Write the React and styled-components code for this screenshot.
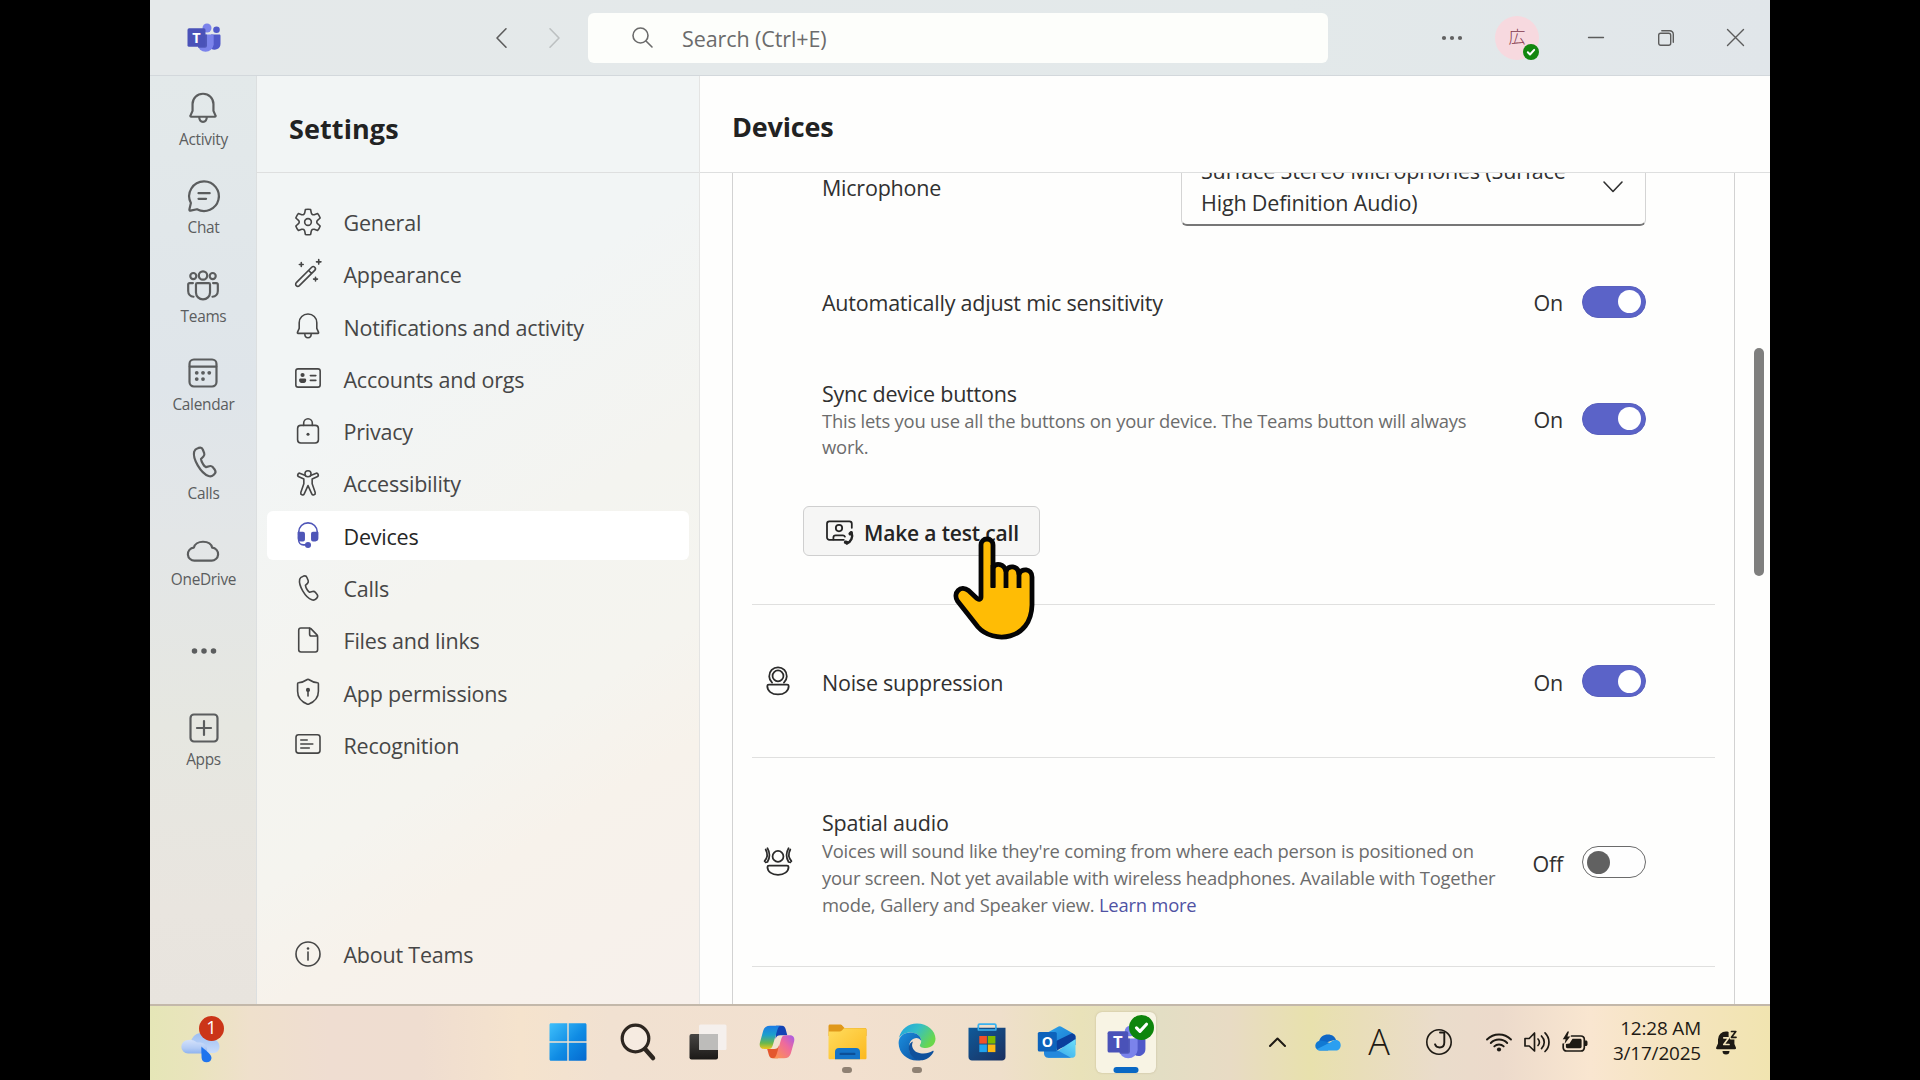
import React from "react";
import styled, { createGlobalStyle } from "styled-components";

const Global = createGlobalStyle`
  * { box-sizing: border-box; }
  html, body { margin: 0; padding: 0; background: #000; overflow: hidden; }
  body { font-family: "Open Sans", "Noto Sans", "Noto Sans CJK JP", sans-serif; color: #2b2b2b; }
`;

/* ---------- shell ---------- */
const Screen = styled.div`
  width: 1920px;
  height: 1080px;
  padding: 0 150px;
  background: #000;
`;
const Desktop = styled.div`
  width: 1620px;
  height: 1080px;
  display: flex;
  flex-direction: column;
  overflow: hidden;
`;
const Window = styled.div`
  height: 1004px;
  display: flex;
  flex-direction: column;
  background: #fefefd;
`;
const Columns = styled.div`
  flex: 1;
  min-height: 0;
  display: flex;
`;

/* ---------- title bar ---------- */
const TitleBar = styled.header`
  height: 76px;
  flex: none;
  display: flex;
  align-items: center;
  border-bottom: 1px solid #d3d8dc;
  background: linear-gradient(90deg, #e5e9ea 0%, #e3e9ea 70%, #e1e6ea 100%);
`;
const BarItem = styled.div`
  display: flex;
  flex: none;
  margin-left: ${(p) => p.$ml}px;
  color: ${(p) => p.$color || "#5c5c5c"};
`;
const SearchBox = styled.div`
  width: 740px;
  height: 50px;
  margin-left: 28px;
  padding-left: 44px;
  display: flex;
  align-items: center;
  gap: 29px;
  border-radius: 6px;
  background: #fdfefb;
  color: #6b6b6b;
  font-size: 21.5px;
  letter-spacing: -0.1px;
  line-height: 30px;
  span { padding-top: 3px; }
`;
const Avatar = styled.div`
  position: relative;
  width: 44px;
  height: 44px;
  margin-left: 32px;
  display: flex;
  align-items: center;
  justify-content: center;
  border-radius: 50%;
  background: #f7d9df;
  color: #83384c;
  font: 300 17px/20px "Noto Sans CJK JP", sans-serif;
`;
const AvatarText = styled.span`
  padding-bottom: 3px;
`;
const Presence = styled.span`
  position: absolute;
  right: 0;
  bottom: 0;
  width: 16px;
  height: 16px;
  display: flex;
  border-radius: 50%;
  background: #13870f;
`;

/* ---------- app rail ---------- */
const Rail = styled.nav`
  width: 107px;
  flex: none;
  padding: 13px 0 0 1px;
  display: flex;
  flex-direction: column;
  align-items: center;
  border-right: 1px solid #dcdfe0;
  background: linear-gradient(180deg, #e3e9ea 0%, #dfe5ea 33%, #e3e6e7 50%, #e6e7e1 70%, #e9e5df 90%, #e8e4de 100%);
`;
const RailItem = styled.a`
  margin-top: ${(p) => (p.$gap === undefined ? 27.4 : p.$gap)}px;
  display: flex;
  flex-direction: column;
  align-items: center;
  gap: 3px;
  color: #5b5d5e;
  font-size: 15.4px;
  line-height: 20px;
  letter-spacing: -0.3px;
`;

/* ---------- settings panel ---------- */
const Panel = styled.aside`
  width: 442px;
  flex: none;
  display: flex;
  flex-direction: column;
  background: linear-gradient(148deg, #f2f5f5 0%, #f2f5f5 32%, #f4f4f0 52%, #f5f4ef 68%, #f7f2eb 78%, #f7f0eb 100%);
`;
const PanelTitle = styled.h1`
  height: 97px;
  margin: 0;
  padding: ${(p) => (p.$main ? "32px 0 0 32px" : "34px 0 0 32px")};
  border-bottom: 1px solid #dedfdf;
  color: #222;
  font-size: 27px;
  font-weight: 700;
  line-height: 38px;
  letter-spacing: ${(p) => (p.$main ? -0.2 : 0.1)}px;
`;
const NavList = styled.div`
  flex: 1;
  padding: 24px 10px 0 10px;
  display: flex;
  flex-direction: column;
  gap: 3.3px;
`;
const NavItem = styled.a`
  height: 49px;
  flex: none;
  margin-top: ${(p) => (p.$last ? "auto" : 0)};
  margin-bottom: ${(p) => (p.$last ? 26 : 0)}px;
  padding-left: 25px;
  display: flex;
  align-items: center;
  gap: 19.5px;
  border-radius: 6px;
  background: ${(p) => (p.$active ? "#fff" : "transparent")};
  color: ${(p) => (p.$active ? "#262626" : "#464646")};
  font-size: 21.5px;
  line-height: 30px;
  letter-spacing: -0.22px;
  svg { color: ${(p) => (p.$active ? "#4f56b8" : "inherit")}; }
  span { padding-top: 3px; }
`;

/* ---------- main ---------- */
const Main = styled.main`
  flex: 1;
  min-width: 0;
  display: flex;
  flex-direction: column;
  border-left: 1px solid #e4e4e3;
  background: #fefefd;
`;
const Body = styled.div`
  flex: 1;
  min-height: 0;
  padding-left: 32px;
  display: flex;
  align-items: flex-start;
  overflow: hidden;
`;
const Card = styled.div`
  width: 1003px;
  height: 940px;
  margin-top: -26px;
  padding: 0 19px;
  flex: none;
  border: 1px solid #d2d2d2;
`;
const ScrollThumb = styled.div`
  width: 10px;
  height: 228px;
  margin: 175px 0 0 19px;
  border-radius: 5px;
  background: #7f7f7e;
`;
const Section = styled.section`
  height: ${(p) => p.$h}px;
  border-bottom: 1px solid #e0e0df;
`;
const SettingRow = styled.div`
  height: ${(p) => p.$h}px;
  margin-top: ${(p) => p.$mt || 0}px;
  padding-right: 69px;
  display: grid;
  grid-template-columns: 70px 682px 1fr;
  align-items: center;
`;
const IconCell = styled.div`
  width: 51px;
  display: flex;
  justify-content: center;
  color: #2b2b2b;
`;
const Copy = styled.div`
  padding-top: ${(p) => (p.$pt === undefined ? 2 : p.$pt)}px;
`;
const Label = styled.div`
  color: #303030;
  font-size: 21.5px;
  line-height: 29px;
  letter-spacing: -0.23px;
`;
const Hint = styled.div`
  color: #6c6c6c;
  font-size: 18.4px;
  line-height: ${(p) => p.$lh}px;
  letter-spacing: -0.21px;
  a { color: #4f52a3; }
`;
const Control = styled.div`
  display: flex;
  align-items: center;
  justify-content: flex-end;
  gap: 19px;
  color: #303030;
  font-size: 21.5px;
  line-height: 29px;
  letter-spacing: -0.2px;
  span { padding-top: 2px; }
`;
const Switch = styled.div`
  width: 64px;
  height: 32px;
  padding: 0 4px;
  display: flex;
  align-items: center;
  justify-content: ${(p) => (p.$on ? "flex-end" : "flex-start")};
  border-radius: 16px;
  border: 1.5px solid ${(p) => (p.$on ? "#5960bd" : "#6b6b6b")};
  background: ${(p) => (p.$on ? "#5b63c8" : "#fefefe")};
  &::after {
    content: "";
    width: 23px;
    height: 23px;
    border-radius: 50%;
    background: ${(p) => (p.$on ? "#fff" : "#616161")};
  }
`;
const MicRow = styled.div`
  height: 78px;
  padding: 0 69px 0 70px;
  display: flex;
  align-items: center;
  justify-content: space-between;
`;
const Select = styled.div`
  width: 465px;
  height: 78px;
  padding: 1px 19px 0 19px;
  display: flex;
  align-items: center;
  justify-content: space-between;
  border: 1px solid #d4d4d4;
  border-bottom: 2px solid #777;
  border-radius: 6px;
  color: #303030;
  font-size: 21.5px;
  line-height: 32px;
  letter-spacing: -0.17px;
  p { margin: 0; width: 372px; }
`;
const TestButton = styled.button`
  position: relative;
  width: 237px;
  height: 50px;
  margin: 29px 0 0 51px;
  padding: 0 0 0 19px;
  display: flex;
  align-items: center;
  gap: 9px;
  border: 1.5px solid #cfcfcf;
  border-radius: 6px;
  background: #f6f6f5;
  color: #242424;
  font: 600 21px/30px "Open Sans", sans-serif;
  letter-spacing: -0.16px;
  white-space: nowrap;
  span { padding-top: 4px; }
`;
const Pointer = styled.svg`
  position: absolute;
  left: 148px;
  top: 27px;
  width: 84px;
  height: 107px;
`;

/* ---------- taskbar ---------- */
const Taskbar = styled.footer`
  height: 76px;
  flex: none;
  padding: 0 33px 2px 31px;
  display: flex;
  align-items: center;
  border-top: 2px solid #c3b8aa;
  background: linear-gradient(90deg, #e5e6b7 0, #e9e4bc 40px, #efe0cc 100px, #efddd1 180px, #efddd0 270px, #f5e3cd 370px, #f1e1d1 460px, #f2e0cf 700px, #efdfcb 850px, #e9e2b9 930px, #e3dec4 1010px, #e8dbc4 1080px, #e8e1ad 1160px, #e9deb9 1210px, #eadccb 1290px, #ecdacb 1350px, #f9e6d0 1440px, #f5e4c0 1520px, #f1e4b0 1620px);
`;
const Weather = styled.div`
  position: relative;
  width: 40px;
  display: flex;
  padding-top: 7px;
`;
const CountBadge = styled.span`
  position: absolute;
  left: 18px;
  top: -6px;
  width: 25px;
  height: 25px;
  border-radius: 50%;
  background: #cb3518;
  color: #fff;
  font-size: 18px;
  line-height: 23px;
  text-align: center;
`;
const PinnedApps = styled.div`
  margin-left: 317px;
  display: flex;
  gap: 9.8px;
`;
const AppSlot = styled.div`
  position: relative;
  width: 60px;
  height: 61px;
  display: flex;
  align-items: center;
  justify-content: center;
  border-radius: 6px;
  background: ${(p) => (p.$active ? "#f8f4e4" : "transparent")};
  box-shadow: ${(p) => (p.$active ? "0 0 2px rgba(120,100,60,.35)" : "none")};
  &::after {
    content: "";
    display: ${(p) => (p.$run ? "block" : "none")};
    position: absolute;
    bottom: 0;
    left: 50%;
    width: ${(p) => (p.$active ? 25 : 10)}px;
    height: 6px;
    transform: translateX(-50%);
    border-radius: 3px;
    background: ${(p) => (p.$active ? "#0a68c4" : "#8f8173")};
  }
`;
const AppCheck = styled.span`
  position: absolute;
  right: 2px;
  top: 3px;
  width: 25px;
  height: 25px;
  display: flex;
  border-radius: 50%;
  background: #0e850c;
`;
const Tray = styled.div`
  margin-left: auto;
  display: flex;
  align-items: center;
  color: #1e1a14;
`;
const TrayItem = styled.div`
  margin-left: ${(p) => p.$ml || 0}px;
  display: flex;
`;
const ImeMode = styled.span`
  width: 26px;
  margin: 0 -3px;
  font: 300 36px/36px "Open Sans", sans-serif;
  text-align: center;
`;
const Clock = styled.div`
  width: 113px;
  padding-bottom: 2px;
  font-size: 18.9px;
  line-height: 25px;
  letter-spacing: -0.15px;
  text-align: right;
`;

/* ---------- icons ---------- */
const Svg = styled.svg`
  width: ${(p) => p.$w}px;
  height: ${(p) => p.$h || p.$w}px;
  flex: none;
  display: block;
  fill: none;
  stroke: currentColor;
  stroke-width: ${(p) => p.$sw || 1};
  stroke-linecap: round;
  stroke-linejoin: round;
  overflow: visible;
`;
const PHONE =
  "M6.7 2.75l.6-.2c.9-.3 1.8.2 2.1 1l.7 1.8c.2.6.1 1.3-.4 1.8L8.4 8.4c.1.9.5 1.8 1.1 2.7.4.7.9 1.2 1.5 1.6l1.8-.5c.7-.2 1.4 0 1.9.6l1 1.3c.5.7.4 1.6-.2 2.2l-.5.5c-.7.7-1.7.9-2.6.6-2.1-.7-4-2.7-5.7-5.6C5 8.8 4.4 6.3 4.8 4.6c.3-.9 1-1.6 1.9-1.85z";
const ART = {
  gear: (
    <>
      <path d="M2.4 7.5A8 8 0 0 1 4 4.65l2.1.75a1.4 1.4 0 0 0 1.85-1.08l.4-2.1a8 8 0 0 1 3.3 0l.4 2.1a1.4 1.4 0 0 0 1.85 1.08L16 4.65a8 8 0 0 1 1.6 2.85l-1.65 1.45a1.4 1.4 0 0 0 0 2.1l1.65 1.45A8 8 0 0 1 16 15.35l-2.1-.75a1.4 1.4 0 0 0-1.85 1.08l-.4 2.1a8 8 0 0 1-3.3 0l-.4-2.1A1.4 1.4 0 0 0 6.1 14.6L4 15.35a8 8 0 0 1-1.6-2.85l1.65-1.45a1.4 1.4 0 0 0 0-2.1z" />
      <circle cx="10" cy="10" r="2.1" />
    </>
  ),
  wand: (
    <>
      <path d="M2.7 17.3a1.3 1.3 0 0 1 0-1.9L12.3 5.8a1.3 1.3 0 0 1 1.9 1.9L4.6 17.3a1.3 1.3 0 0 1-1.9 0zM10.4 7.8l1.8 1.8" />
      <path d="M5.8 2.9v2.4M4.6 4.1h2.4M16.7 1v2.8M15.3 2.4h2.8M14.7 12v2.4M13.5 13.2h2.4" />
    </>
  ),
  bell: (
    <path d="M10 2.5c3.1 0 5.5 2.4 5.5 5.4v3.6l1.1 2.5a.4.4 0 0 1-.4.6H3.8a.4.4 0 0 1-.4-.6l1.1-2.5V7.9c0-3 2.4-5.4 5.5-5.4zM8 14.8c0 1.4.8 2.5 2 2.5s2-1.1 2-2.5" />
  ),
  idcard: (
    <>
      <rect x="2.4" y="4.3" width="15.2" height="11.4" rx="1.4" />
      <path d="M11.5 8.5h3.4M11.5 11.5h3.4" />
      <circle cx="6.6" cy="8.1" r="1.3" fill="currentColor" stroke="none" />
      <path d="M4.4 11.2c0-.5.4-.9.9-.9H8c.5 0 .9.4.9.9 0 1.3-1 2-2.2 2s-2.3-.7-2.3-2z" fill="currentColor" stroke="none" />
    </>
  ),
  lock: (
    <>
      <rect x="3.5" y="6.5" width="13" height="11" rx="2" />
      <path d="M7.3 6.5V5a2.7 2.7 0 0 1 5.4 0v1.5" />
      <circle cx="10" cy="12" r=".95" fill="currentColor" stroke="none" />
    </>
  ),
  access: (
    <>
      <circle cx="10" cy="4.2" r="1.9" />
      <path d="M8.4 5.3L5.2 4a1.15 1.15 0 0 0-.9 2.15L7.4 7.5v3L5.5 16a1.15 1.15 0 0 0 2.15.8L10 11.6l2.35 5.2a1.15 1.15 0 0 0 2.15-.8l-1.9-5.5v-3l3.1-1.35A1.15 1.15 0 0 0 14.8 4l-3.2 1.3" />
    </>
  ),
  headset: (
    <>
      <path d="M4.2 10V8.2a5.8 5.8 0 0 1 11.6 0V10M4.2 11v2.3c0 1.6 1.2 2.9 2.9 2.9h1.3" />
      <path d="M4 8.5h2.9c.4 0 .7.3.7.7v3.6c0 .4-.3.7-.7.7H5.4A1.4 1.4 0 0 1 4 12.1zM16 8.5h-2.9c-.4 0-.7.3-.7.7v3.6c0 .4.3.7.7.7h1.5a1.4 1.4 0 0 0 1.400-1.400z" fill="currentColor" />
      <circle cx="10" cy="16.300" r="1.900" fill="currentColor" stroke="none" />
    </>
  ),
  phone: <path d={PHONE} />,
  file: (
    <path d="M5.6 2.5h5.2c.4 0 .7.1 1 .4l3.8 3.9c.3.3.4.6.4 1v8.3c0 .8-.6 1.4-1.4 1.4h-9c-.8 0-1.4-.6-1.4-1.4V3.9c0-.8.6-1.4 1.4-1.4zM11 2.6v3.8c0 .6.5 1.1 1.1 1.1h3.7" />
  ),
  shield: (
    <>
      <path d="M9.6 2.2a.7.7 0 0 1 .8 0c1.6 1.1 3.5 1.8 5.6 2 .3 0 .5.3.5.6V9.5c0 3.7-2.1 6.5-6.2 8.1a.8.8 0 0 1-.6 0c-4.1-1.6-6.2-4.4-6.2-8.1V4.8c0-.3.2-.6.5-.6 2.1-.2 4-.9 5.6-2z" />
      <circle cx="10" cy="8.700" r="1.300" fill="currentColor" stroke="none" />
      <path d="M10 9.500v3" />
    </>
  ),
  recog: (
    <>
      <rect x="2.500" y="4.200" width="15" height="11.500" rx="1.600" />
      <path d="M5.500 7.500h4M5.500 10h7.500M5.500 12.500h5.300" />
    </>
  ),
  info: (
    <>
      <circle cx="10" cy="10" r="7.500" />
      <path d="M10 8.800v5" />
      <circle cx="10" cy="6.600" r=".8" fill="currentColor" stroke="none" />
    </>
  ),
  chat: (
    <path d="M10 2.300a7.800 7.800 0 1 1-3.700 14.650L2.900 17.700a.5.500 0 0 1-.6-.6L3.100 13.700A7.800 7.800 0 0 1 10 2.300zM7.100 8.500h5.900M7.100 11.500h4" />
  ),
  teams: (
    <>
      <circle cx="10" cy="5" r="2.200" />
      <circle cx="4.900" cy="5.300" r="1.600" />
      <circle cx="15.100" cy="5.300" r="1.600" />
      <path d="M7 9h6c.4 0 .7.3.7.7v4.200a3.700 3.700 0 0 1-7.400 0V9.700c0-.4.3-.7.7-.7zM4.700 9H3c-.5 0-.8.3-.8.8v3.400A3 3 0 0 0 5 16.200M15.300 9H17c.5 0 .8.3.8.8v3.400A3 3 0 0 1 15 16.200" />
    </>
  ),
  calendar: (
    <>
      <rect x="2.900" y="2.900" width="14.200" height="14.200" rx="2.300" />
      <path d="M3 6.600h14" />
      <g fill="currentColor" stroke="none">
        <circle cx="6.700" cy="9.900" r="1" /><circle cx="10" cy="9.900" r="1" /><circle cx="13.300" cy="9.900" r="1" />
        <circle cx="6.700" cy="13.200" r="1" /><circle cx="10" cy="13.200" r="1" />
      </g>
    </>
  ),
  cloud: (
    <path d="M5.700 16.600h8.600a3.400 3.400 0 0 0 .5-6.800C14.400 7.800 12.400 6.700 10 6.700s-4.400 1.300-4.800 3.100a3.400 3.400 0 0 0 .5 6.800z" />
  ),
  dots: (
    <g fill="currentColor" stroke="none">
      <circle cx="5" cy="10" r="1.450" /><circle cx="10" cy="10" r="1.450" /><circle cx="15" cy="10" r="1.450" />
    </g>
  ),
  apps: (
    <>
      <rect x="2.900" y="2.900" width="14.200" height="14.200" rx="1.800" />
      <path d="M10 6.300v7.400M6.300 10h7.400" />
    </>
  ),
  noise: (
    <>
      <circle cx="10" cy="6.800" r="3.400" />
      <path d="M6.300 11a5.500 5.500 0 1 1 7.400 0" />
      <path d="M4.300 12.200h11.400c.6 0 1 .4 1 1 0 3-2.700 5.200-6.700 5.200s-6.700-2.200-6.700-5.200c0-.6.4-1 1-1z" />
    </>
  ),
  spatial: (
    <>
      <circle cx="10" cy="6.500" r="3.400" />
      <path d="M4.400 12.200h11.200c.6 0 1 .4 1 .9 0 2.900-2.700 4.900-6.600 4.900s-6.600-2-6.600-4.900c0-.5.4-.9 1-.9z" />
      <path d="M3.400 1.400c1.700 2.900 1.700 5.700 0 8.600l-1.200.2M2.300 2.200c1.300 2.400 1.300 5-.7 7.200M16.600 1.400c-1.700 2.900-1.700 5.700 0 8.600l1.200.2M17.700 2.200c-1.300 2.400-1.300 5 .7 7.200" />
    </>
  ),
  testcall: (
    <>
      <path d="M13 15.500H4A1.500 1.500 0 0 1 2.500 14V5.500A1.500 1.500 0 0 1 4 4h12.500a1.500 1.500 0 0 1 1.500 1.500V8" />
      <circle cx="10" cy="8.200" r="2" />
      <path d="M6.500 15.300v-1.200c0-.8.6-1.300 1.400-1.300h4.600c.6 0 1 .3 1.200.7" />
      <path d="M17.800 10.800c1.100 2.900-.1 6-3 7" strokeWidth="1.500" />
      <path d="M17.500 11.200l-.5.500M15 17.300l-.9-.3" strokeWidth="2.200" />
    </>
  ),
};
const Icon = ({ name, size = 32, sw }) => (
  <Svg viewBox="0 0 20 20" $w={size} $sw={sw} aria-hidden="true">{ART[name]}</Svg>
);
const Check = ({ size }) => (
  <Svg viewBox="0 0 16 16" $w={size} $sw={2}>
    <path d="M4.800 8.300l2.200 2.200 4.200-4.600" stroke="#fff" />
  </Svg>
);

const TeamsLogo = ({ w = 34, h = 30 }) => (
  <Svg viewBox="0 0 34 30" $w={w} $h={h}>
    <g stroke="none">
      <circle cx="20" cy="5" r="4.500" fill="#7b83eb" />
      <circle cx="29.500" cy="6.700" r="3.300" fill="#5059c9" />
      <path d="M24 11.500h8.300c.7 0 1.200.5 1.200 1.200v8a6 6 0 0 1-9.500 4.900z" fill="#5059c9" />
      <path d="M12 11.500h13.300c.8 0 1.400.6 1.400 1.400v8.600a8.200 8.200 0 0 1-16.300 0z" fill="#7b83eb" />
      <path d="M10.400 11.500H20v11.300a2 2 0 0 1-2 2h-6.900z" fill="#3f47a5" opacity=".7" />
      <rect x=".5" y="5.300" width="18" height="18.500" rx="1.600" fill="#4a52b8" />
      <text x="9.500" y="19.800" textAnchor="middle" fill="#fff" fontFamily="Open Sans" fontWeight="700" fontSize="14.500">T</text>
    </g>
  </Svg>
);

const WeatherIcon = () => (
  <Svg viewBox="0 0 39 34" $w={39} $h={34}>
    <defs>
      <linearGradient id="wc" x1="0" y1="0" x2="0" y2="1"><stop offset="0" stopColor="#9dbef2" /><stop offset="1" stopColor="#c9dcfa" /></linearGradient>
      <linearGradient id="wc2" x1="0" y1="0" x2="0" y2="1"><stop offset="0" stopColor="#d3e1fa" /><stop offset=".6" stopColor="#b3cbf5" /><stop offset="1" stopColor="#8fb3ef" /></linearGradient>
    </defs>
    <g stroke="none">
      <path d="M10 13a10.500 10.500 0 0 1 20-3c5 0 8.500 3 8.500 7.500 0 4-2.500 6.500-6 6.500H10z" fill="url(#wc)" />
      <path d="M7 24.500a6.700 6.700 0 0 1 0-13.400 10 10 0 0 1 9 2.500c5-1 9 1.500 10 5 .8 3.500-1 5.900-4.500 5.900z" fill="url(#wc2)" />
      <path d="M20.500 17.500c2.500 3 10 7 10 11.500a5 5 0 0 1-9.900 0c0-4-.6-9-.1-11.500z" fill="#1f74ee" />
    </g>
  </Svg>
);

const StartIcon = () => (
  <Svg viewBox="0 0 38 38" $w={38}>
    <defs><linearGradient id="ws" x1="0" y1="0" x2="1" y2="1"><stop offset="0" stopColor="#3fc0fb" /><stop offset=".55" stopColor="#0f8be4" /><stop offset="1" stopColor="#0569cf" /></linearGradient></defs>
    <path stroke="none" fill="url(#ws)" d="M2 .3h16.300v18H.5V1.800C.5 1 1 .3 2 .3zM19.700.3H36c1 0 1.500.7 1.500 1.500v16.500H19.700zM.5 19.700h17.800v18H2c-1 0-1.500-.7-1.500-1.500zM19.700 19.700h17.800v16.500c0 .8-.5 1.500-1.500 1.500H19.700z" />
  </Svg>
);
const FindIcon = () => (
  <Svg viewBox="0 0 36 38" $w={36} $h={38} $sw={3.200}>
    <circle cx="15.500" cy="15.500" r="13.300" stroke="#2d2620" fill="rgba(255,255,255,.35)" />
    <path d="M25.500 26.500l7.500 8.500" stroke="#2d2620" strokeWidth="4.500" />
  </Svg>
);
const TaskViewIcon = () => (
  <Svg viewBox="0 0 38 36" $w={38} $h={36}>
    <defs><linearGradient id="tv" x1="0" y1="0" x2="0" y2="1"><stop offset="0" stopColor="#474543" /><stop offset="1" stopColor="#1b1917" /></linearGradient></defs>
    <g stroke="none">
      <rect x=".5" y="10" width="28.500" height="25.500" rx="2" fill="url(#tv)" />
      <rect x="10" y=".5" width="27.500" height="25.500" rx="1.500" fill="#f5f2ef" opacity=".9" />
      <path d="M10 10h19v16H11.500A1.500 1.500 0 0 1 10 24.500z" fill="#bdbcba" />
    </g>
  </Svg>
);
const CopilotIcon = () => (
  <Svg viewBox="0 0 36 34" $w={36} $h={34}>
    <defs>
      <linearGradient id="c1" x1="0" y1="0" x2="0" y2="1"><stop offset="0" stopColor="#1b7be6" /><stop offset=".4" stopColor="#1c9fcb" /><stop offset=".75" stopColor="#6bb84c" /><stop offset="1" stopColor="#f0c51c" /></linearGradient>
      <linearGradient id="c2" x1="1" y1="0" x2="0" y2="1"><stop offset="0" stopColor="#a45bea" /><stop offset=".4" stopColor="#ee6a9d" /><stop offset="1" stopColor="#ff9a45" /></linearGradient>
    </defs>
    <g stroke="none">
      <path d="M17 .8h6c2.200 0 3 1.300 3.600 3.200l1.700 6.200h-7c-2.600 0-3.800 1-4.800 3.800z" fill="#1243b5" />
      <path d="M19 33.300h-5.500c-2.200 0-3-1.300-3.600-3.200L8.200 24h7c2.600 0 3.800-1 4.800-3.800z" fill="#e4572e" />
      <path d="M11 .8h11.500c-2.400 0-3.300 1.500-4.200 4.300l-4.600 15.400c-.8 2.400-1.800 3.500-4.200 3.500H5.200C1.600 24 0 21.400.9 17.800l3.300-12C5.200 2.500 7.500.8 11 .8z" fill="url(#c1)" />
      <path d="M25 33.300H13.500c2.400 0 3.300-1.500 4.200-4.300l4.600-15.300c.8-2.400 1.800-3.500 4.200-3.500h4.300c3.600 0 5.200 2.600 4.300 6.200l-3.300 12c-1 3.200-3.300 4.900-6.800 4.900z" fill="url(#c2)" />
    </g>
  </Svg>
);
const FolderIcon = () => (
  <Svg viewBox="0 0 39 36" $w={39} $h={36}>
    <defs><linearGradient id="fo" x1="0" y1="0" x2="1" y2="1"><stop offset="0" stopColor="#ffdc5e" /><stop offset="1" stopColor="#fcb91f" /></linearGradient></defs>
    <g stroke="none">
      <path d="M.5 2c0-.9.6-1.500 1.500-1.500h10c1 0 1.600.3 2.200 1L16.500 4H37c.9 0 1.500.6 1.500 1.500V12H.5z" fill="#e0981a" />
      <path d="M.5 7.500h11c1 0 1.700-.3 2.400-1L16 4.300h21c.9 0 1.500.6 1.500 1.500V34c0 .8-.6 1.300-1.500 1.300H2c-.9 0-1.500-.5-1.500-1.300z" fill="url(#fo)" />
      <path d="M7 35.300V28c0-2.500 1.400-4 4-4h17c2.600 0 4 1.500 4 4v7.300z" fill="#1474c8" />
      <rect x="11.500" y="28.700" width="16" height="2.400" rx="1.200" fill="#0b4f98" />
    </g>
  </Svg>
);
const EdgeIcon = () => (
  <Svg viewBox="0 0 38 38" $w={38}>
    <defs>
      <linearGradient id="e1" x1="0" y1="0" x2="1" y2=".5"><stop offset="0" stopColor="#1d9fe3" /><stop offset=".5" stopColor="#35bfc6" /><stop offset="1" stopColor="#6ad74c" /></linearGradient>
      <linearGradient id="e2" x1="0" y1="0" x2="1" y2="1"><stop offset="0" stopColor="#1b8fdf" /><stop offset="1" stopColor="#0c4f9f" /></linearGradient>
    </defs>
    <g stroke="none">
      <path d="M1 15C3 6 10 .5 19 .5c10.500 0 18.500 7.500 18.500 15.300 0 5.700-4.500 9.200-9.700 9.200-4.300 0-6-1.500-6-2.600 0-1 1.400-1.500 1.400-4.400C23.200 13 18.500 9.500 12.500 9.500 7 9.500 3 12 1 15z" fill="url(#e1)" />
      <path d="M.6 20C.6 13.500 6 9.500 12.500 9.500c6 0 10.700 3.500 10.700 8.500 0 0-1.500-3-4.700-3-4 0-7.500 3.500-7.500 9.500 0 6.500 5 12 12 12.500-1.500.4-2.500.5-4 .5C9 37.500.6 30 .6 20z" fill="url(#e2)" />
      <path d="M15 18.500c-1 2.200-1.200 4-.5 6 1.500 4.500 6.500 6 11 6 3.500 0 6.500-1 9-2.500.8-.5 1.400.2 1 1C33 34 28 37.500 22 37.300 14 36.500 10.500 30 10.800 24c.2-2.700 2-5 4.200-5.500z" fill="#10519c" />
    </g>
  </Svg>
);
const StoreIcon = () => (
  <Svg viewBox="0 0 38 38" $w={38}>
    <defs><linearGradient id="st" x1="0" y1="0" x2="1" y2="1"><stop offset="0" stopColor="#0f5a9a" /><stop offset="1" stopColor="#1b2f5f" /></linearGradient></defs>
    <path d="M10.300 7V2.500c0-.9.6-1.300 1.300-1.300h15c.7 0 1.300.4 1.300 1.300V7" stroke="#3bb2ef" strokeWidth="1.800" />
    <g stroke="none">
      <path d="M.5 4.800h37V34c0 2-1.500 3.500-3.500 3.500H4C2 37.500.5 36 .5 34z" fill="url(#st)" />
      <rect x="11.300" y="13" width="7.600" height="7.600" fill="#f0512a" />
      <rect x="19.800" y="13" width="7.600" height="7.600" fill="#7fb900" />
      <rect x="11.300" y="21.500" width="7.600" height="7.600" fill="#1fa3ee" />
      <rect x="19.800" y="21.500" width="7.600" height="7.600" fill="#fdb813" />
    </g>
    <path d="M10.300 4.800V7h17.600V4.800" stroke="#3bb2ef" strokeWidth="1.500" />
  </Svg>
);
const OutlookIcon = () => (
  <Svg viewBox="0 0 39 34" $w={39} $h={34}>
    <defs>
      <linearGradient id="ou" x1="0" y1="0" x2="1" y2="1"><stop offset="0" stopColor="#2fa6ea" /><stop offset="1" stopColor="#1672cf" /></linearGradient>
      <linearGradient id="ou2" x1="1" y1="0" x2="0" y2="1"><stop offset="0" stopColor="#6fe0fb" /><stop offset="1" stopColor="#2c9fe6" /></linearGradient>
    </defs>
    <g stroke="none">
      <path d="M7 9.500L21.500 1.600a2.500 2.500 0 0 1 2.400 0L37 9a3 3 0 0 1 1.500 2.600V20L7 26z" fill="url(#ou)" />
      <path d="M18 16.500L35 8.200l2.300 1.200a2.500 2.500 0 0 1 1.200 2.200v2.900L20 25.500z" fill="#0b3f9d" />
      <path d="M38.500 14v15.500c0 1.900-1.300 3.200-3.200 3.200H10.500z" fill="url(#ou2)" />
      <path d="M7 24l11 0 16 8.700H11c-2.300 0-4-1.700-4-4z" fill="#2388dc" />
      <rect x=".8" y="7" width="19" height="19.500" rx="1.600" fill="#0d63bb" />
      <text x="10.300" y="22" textAnchor="middle" fill="#fff" fontFamily="Open Sans" fontWeight="700" fontSize="14">O</text>
    </g>
  </Svg>
);
const OneDriveIcon = () => (
  <Svg viewBox="0 0 26 17" $w={26} $h={17}>
    <g stroke="none">
      <path d="M4 7.500C5 3 8.500.5 13 .5c4 0 7 2.200 8 5.500-4 0-10 2-17 7z" fill="#0f67c5" />
      <path d="M5 6.800c-3 .3-4.700 2.400-4.700 5 0 2.700 2 4.700 4.700 4.700h8L16 10C12 7.500 8 6.500 5 6.800z" fill="#1179d2" />
      <path d="M5 16.500c-1.500 0-2.500-.4-3.300-1.200L16 8c1.500-1.500 3-2 5-2 2.800 0 4.700 2.300 4.700 5.200 0 3-2 5.300-5 5.300z" fill="#2b9ff0" />
    </g>
  </Svg>
);

const RAIL = [
  ["bell", "Activity", 0], ["chat", "Chat"], ["teams", "Teams"], ["calendar", "Calendar"],
  ["phone", "Calls"], ["cloud", "OneDrive", 25], ["dots", null, 42.500], ["apps", "Apps", 38.600],
];
const NAV = [
  ["gear", "General"], ["wand", "Appearance"], ["bell", "Notifications and activity"],
  ["idcard", "Accounts and orgs"], ["lock", "Privacy"], ["access", "Accessibility"],
  ["headset", "Devices"], ["phone", "Calls"], ["file", "Files and links"],
  ["shield", "App permissions"], ["recog", "Recognition"], ["info", "About Teams"],
];

const Toggle = ({ on }) => (
  <Control><span>{on ? "On" : "Off"}</span><Switch $on={on} /></Control>
);

export default function App() {
  return (
    <Screen>
      <Global />
      <Desktop>
        <Window>
          <TitleBar>
            <BarItem $ml={37}><TeamsLogo /></BarItem>
            <BarItem $ml={275}><Svg viewBox="0 0 11 20" $w={11} $h={20} $sw={1.600}><path d="M10 .8L1 10l9 9.200" /></Svg></BarItem>
            <BarItem $ml={42} $color="#bcc0c1"><Svg viewBox="0 0 11 20" $w={11} $h={20} $sw={1.600}><path d="M1 .8l9 9.200-9 9.200" /></Svg></BarItem>
            <SearchBox>
              <Svg viewBox="0 0 21 21" $w={21} $sw={1.600}><circle cx="8.500" cy="8.500" r="7.500" /><path d="M14 14l6 6" /></Svg>
              <span>Search (Ctrl+E)</span>
            </SearchBox>
            <BarItem $ml={113}>
              <Svg viewBox="0 0 22 6" $w={22} $h={6}><g fill="#616161" stroke="none"><circle cx="3" cy="3" r="2.100" /><circle cx="11" cy="3" r="2.100" /><circle cx="19" cy="3" r="2.100" /></g></Svg>
            </BarItem>
            <Avatar><AvatarText>広</AvatarText><Presence><Check size={16} /></Presence></Avatar>
            <BarItem $ml={49}><Svg viewBox="0 0 16 16" $w={16} $sw={1.300}><path d="M.5 7.500h15" /></Svg></BarItem>
            <BarItem $ml={54}>
              <Svg viewBox="0 0 16 16" $w={16} $sw={1.400}><rect x=".7" y="3.300" width="12" height="12" rx="2" /><path d="M3.800.7h8a3.500 3.500 0 0 1 3.500 3.500v8" /></Svg>
            </BarItem>
            <BarItem $ml={53}><Svg viewBox="0 0 17 17" $w={17} $sw={1.400}><path d="M.5.5l16 16M16.500.5l-16 16" /></Svg></BarItem>
          </TitleBar>

          <Columns>
            <Rail>
              {RAIL.map(([icon, label, gap]) => (
                <RailItem key={icon} $gap={gap}>
                  <Icon name={icon} size={38} sw={1.150} />
                  {label && <span>{label}</span>}
                </RailItem>
              ))}
            </Rail>

            <Panel>
              <PanelTitle>Settings</PanelTitle>
              <NavList>
                {NAV.map(([icon, label]) => (
                  <NavItem key={label} $active={label === "Devices"} $last={label === "About Teams"}>
                    <Icon name={icon} size={32} sw={1} />
                    <span>{label}</span>
                  </NavItem>
                ))}
              </NavList>
            </Panel>

            <Main>
              <PanelTitle as="h2" $main>Devices</PanelTitle>
              <Body>
                <Card>
                  <Section $h={457}>
                    <MicRow>
                      <Label>Microphone</Label>
                      <Select>
                        <p>Surface Stereo Microphones (Surface High Definition Audio)</p>
                        <Svg viewBox="0 0 26 14" $w={26} $h={14} $sw={1.600}><path d="M4 2l9 9.500L22 2" /></Svg>
                      </Select>
                    </MicRow>
                    <SettingRow $h={117} $mt={17}>
                      <IconCell />
                      <Copy><Label>Automatically adjust mic sensitivity</Label></Copy>
                      <Toggle on />
                    </SettingRow>
                    <SettingRow $h={117}>
                      <IconCell />
                      <Copy>
                        <Label>Sync device buttons</Label>
                        <Hint $lh={25.800}>This lets you use all the buttons on your device. The Teams button will always work.</Hint>
                      </Copy>
                      <Toggle on />
                    </SettingRow>
                    <TestButton>
                      <Icon name="testcall" size={32} sw={1.100} />
                      <span>Make a test call</span>
                      <Pointer viewBox="952 534 84 107">
                        <path
                          d="M993 587V545a6 6 0 0 0-12 0V597c0 2.200-2.200 3-4 1.500L968.500 590.500c-8-6-16 2.500-11 10.500L978 627c15 17 53 14 54-22V577c0-9-11-9-13-3-1-9-11-9-13-3-2-7-10-9-13-3"
                          fill="#ffbc05" stroke="#050505" strokeWidth="4.800" strokeLinejoin="round" strokeLinecap="butt"
                        />
                        <path d="M1019 588V572M1006 588V570M993 588V565" fill="none" stroke="#050505" strokeWidth="4.800" />
                      </Pointer>
                    </TestButton>
                  </Section>
                  <Section $h={153}>
                    <SettingRow $h={152}>
                      <IconCell><Icon name="noise" sw={1.100} /></IconCell>
                      <Copy><Label>Noise suppression</Label></Copy>
                      <Toggle on />
                    </SettingRow>
                  </Section>
                  <Section $h={209}>
                    <SettingRow $h={208}>
                      <IconCell><Icon name="spatial" sw={1.100} /></IconCell>
                      <Copy $pt={1}>
                        <Label>Spatial audio</Label>
                        <Hint $lh={27}>
                          Voices will sound like they're coming from where each person is positioned on your screen. Not
                          yet available with wireless headphones. Available with Together mode, Gallery and Speaker
                          view. <a>Learn more</a>
                        </Hint>
                      </Copy>
                      <Toggle />
                    </SettingRow>
                  </Section>
                </Card>
                <ScrollThumb />
              </Body>
            </Main>
          </Columns>
        </Window>

        <Taskbar>
          <Weather><WeatherIcon /><CountBadge>1</CountBadge></Weather>
          <PinnedApps>
            <AppSlot><StartIcon /></AppSlot>
            <AppSlot><FindIcon /></AppSlot>
            <AppSlot><TaskViewIcon /></AppSlot>
            <AppSlot><CopilotIcon /></AppSlot>
            <AppSlot $run><FolderIcon /></AppSlot>
            <AppSlot $run><EdgeIcon /></AppSlot>
            <AppSlot><StoreIcon /></AppSlot>
            <AppSlot><OutlookIcon /></AppSlot>
            <AppSlot $run $active><TeamsLogo w={39} h={35} /><AppCheck><Check size={25} /></AppCheck></AppSlot>
          </PinnedApps>
          <Tray>
            <TrayItem><Svg viewBox="0 0 17 10" $w={17} $h={10} $sw={2}><path d="M1 9l7.500-7.500L16 9" /></Svg></TrayItem>
            <TrayItem $ml={29}><OneDriveIcon /></TrayItem>
            <TrayItem $ml={28}><ImeMode>A</ImeMode></TrayItem>
            <TrayItem $ml={37}>
              <Svg viewBox="0 0 26 26" $w={26} $sw={1.600}><circle cx="13" cy="13" r="12.200" /><path d="M14 3.500h4.300v10c0 3.200-1.800 5-4.600 5-2.200 0-4-1.200-4.700-3.200" strokeWidth="1.900" /></Svg>
            </TrayItem>
            <TrayItem $ml={34}>
              <Svg viewBox="0 0 26 20" $w={26} $h={20} $sw={1.900}><path d="M1 7.500a17 17 0 0 1 24 0M4.800 11a11.500 11.500 0 0 1 16.400 0M8.300 14.400a6.600 6.600 0 0 1 9.400 0" /><circle cx="13" cy="17.500" r="2.100" fill="currentColor" stroke="none" /></Svg>
            </TrayItem>
            <TrayItem $ml={12}>
              <Svg viewBox="0 0 26 22" $w={26} $h={22} $sw={1.700}><path d="M1 7.500h4.200L10.500 2v18l-5.300-5H1zM14 8a4.500 4.500 0 0 1 0 6.500M17.500 5a8.500 8.500 0 0 1 0 12.500M21 1.800a13 13 0 0 1 0 18.700" /></Svg>
            </TrayItem>
            <TrayItem $ml={12}>
              <Svg viewBox="0 0 26 22" $w={26} $h={22} $sw={1.700}>
                <path d="M9.500 5H19a3.300 3.300 0 0 1 3.300 3.300v8.400A3.300 3.300 0 0 1 19 20H4.500a3.300 3.300 0 0 1-3.300-3.300V13" />
                <path d="M10.500 7.800h7.700c.8 0 1.400.6 1.400 1.400v6.600c0 .8-.6 1.400-1.400 1.400H5.300c-.8 0-1.400-.6-1.400-1.400V13l3.600-.5zM22.300 9.500H24c.8 0 1.500.7 1.500 1.500v2.500c0 .8-.7 1.500-1.500 1.500h-1.700zM5.500.5L.8 8.200h2.800L2.500 13l5.700-7.500H5.400L7 .5z" fill="currentColor" stroke="none" />
              </Svg>
            </TrayItem>
            <Clock><div>12:28 AM</div><div>3/17/2025</div></Clock>
            <TrayItem $ml={15}>
              <Svg viewBox="0 0 21 25" $w={21} $h={25}>
                <g fill="currentColor" stroke="none">
                  <path d="M10 1.500c.9 0 1.800.1 2.600.4v4.500l1.800 3h4V14l1.500 3.500c.4.900-.1 1.700-1 1.700H1.200c-.9 0-1.400-.8-1-1.700L2 13.500V9.500a8 8 0 0 1 8-8zM6.500 21h7a3.500 3.500 0 0 1-7 0z" />
                </g>
                <path d="M7.800 7.800h5l-5 6.700h5.200" stroke="#f3e5bd" strokeWidth="1.700" />
                <path d="M15.500 1.500h4.300l-4.300 5.800h4.500" strokeWidth="1.700" />
              </Svg>
            </TrayItem>
          </Tray>
        </Taskbar>
      </Desktop>
    </Screen>
  );
}
